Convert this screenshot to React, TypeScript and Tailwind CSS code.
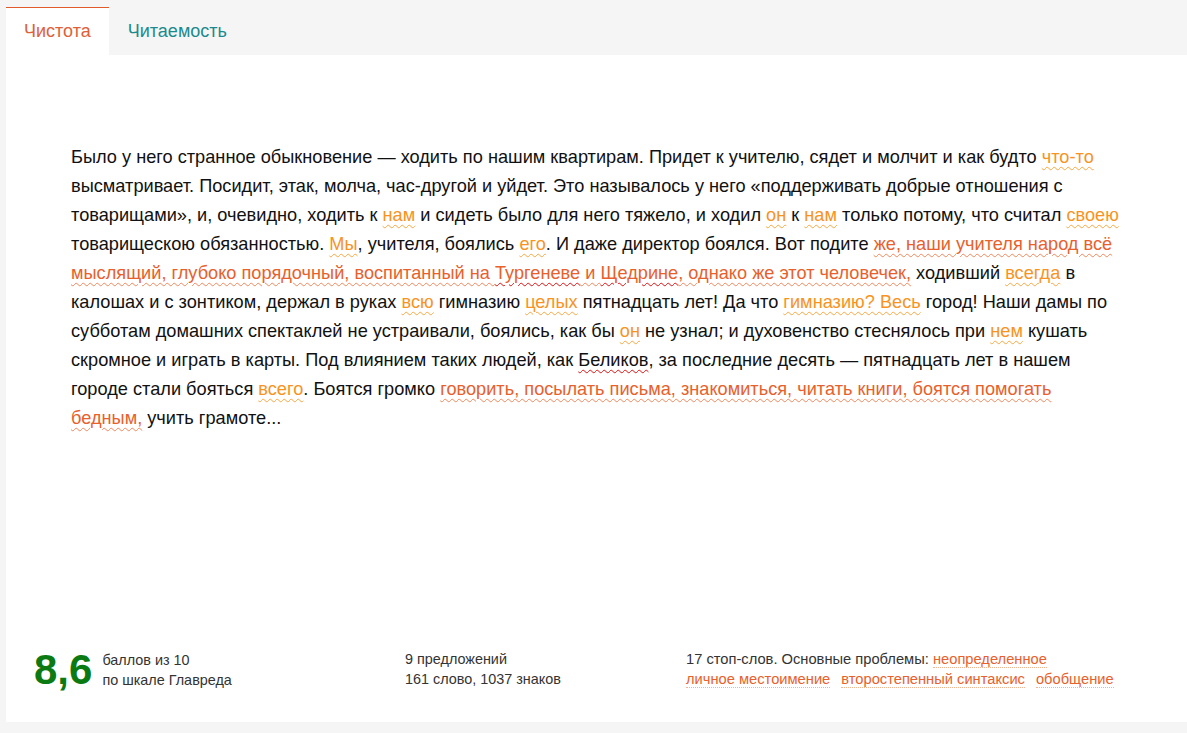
import React from "react";

const O = ({ children }: { children: React.ReactNode }) => (
  <span className="text-[#f7931e] underline decoration-wavy decoration-[#f9a640] decoration-1 underline-offset-[3px]">
    {children}
  </span>
);
const P = ({ children }: { children: React.ReactNode }) => (
  <span className="text-[#e8602c] underline decoration-wavy decoration-[#f0875a] decoration-1 underline-offset-[3px]">
    {children}
  </span>
);
const R = ({ children }: { children: React.ReactNode }) => (
  <span className="underline decoration-wavy decoration-[#e01010] decoration-1 underline-offset-[3px]">
    {children}
  </span>
);
const PR = ({ children }: { children: React.ReactNode }) => (
  <span className="text-[#e8602c] underline decoration-wavy decoration-[#e01010] decoration-1 underline-offset-[3px]">
    {children}
  </span>
);
const Tag = ({ children }: { children: React.ReactNode }) => (
  <span className="text-[#e8602c] border-b border-dotted border-[#f5b48f]">{children}</span>
);

export default function App() {
  return (
    <div
      className="min-h-[733px] w-full bg-[#f5f5f5] pl-[6px] pt-[7px]"
      style={{ fontFamily: '"Liberation Sans", Arial, sans-serif' }}
    >
      <div className="flex h-[48px]">
        <div className="flex items-center bg-white border-t border-[#e05a2b] px-[18px] text-[18px] text-[#e0603a]">
          Чистота
        </div>
        <div className="flex items-center px-[19px] text-[18px] text-[#1b8a8e]">Читаемость</div>
      </div>
      <div className="bg-white h-[667px] flex flex-col">
        <div className="pt-[88px] pl-[65px] pr-[60px] text-[18.2px] leading-[29px] text-[#111]">
          Было у него странное обыкновение — ходить по нашим квартирам. Придет к учителю, сядет и молчит и как будто{" "}
          <O>что-то</O> высматривает. Посидит, этак, молча, час-другой и уйдет. Это называлось у него «поддерживать
          добрые отношения с товарищами», и, очевидно, ходить к <O>нам</O> и сидеть было для него тяжело, и ходил{" "}
          <O>он</O> к <O>нам</O> только потому, что считал <O>своею</O> товарищескою обязанностью. <O>Мы</O>, учителя,
          боялись <O>его</O>. И даже директор боялся. Вот подите{" "}
          <P>же, наши учителя народ всё мыслящий, глубоко порядочный, воспитанный на </P>
          <PR>Тургеневе</PR>
          <P> и </P>
          <PR>Щедрине</PR>
          <P>, однако же этот человечек,</P> ходивший <O>всегда</O> в калошах и с зонтиком, держал в руках{" "}
          <O>всю</O> гимназию <O>целых</O> пятнадцать лет! Да что <O>гимназию? Весь</O> город! Наши дамы по субботам
          домашних спектаклей не устраивали, боялись, как бы <O>он</O> не узнал; и духовенство стеснялось при{" "}
          <O>нем</O> кушать скромное и играть в карты. Под влиянием таких людей, как <R>Беликов</R>, за последние
          десять — пятнадцать лет в нашем городе стали бояться <O>всего</O>. Боятся громко{" "}
          <P>говорить, посылать письма, знакомиться, читать книги, боятся помогать бедным,</P> учить грамоте...
        </div>
        <div className="mt-auto pb-[31px] pl-[28px] flex text-[14.4px] leading-[20px] text-[#333]">
          <div className="w-[371px] flex items-center gap-[10px]">
            <div className="text-[42px] font-bold leading-none text-[#0b7a12]">8,6</div>
            <div>
              <div>баллов из 10</div>
              <div>по шкале Главреда</div>
            </div>
          </div>
          <div className="w-[281px]">
            <div>9 предложений</div>
            <div>161 слово, 1037 знаков</div>
          </div>
          <div className="text-[14.7px]">
            <div>
              17 стоп-слов. Основные проблемы:{" "}
              <Tag>
                неопределенное
                <br />
                личное местоимение
              </Tag>
              <span className="ml-[11px]">
                <Tag>второстепенный синтаксис</Tag>
              </span>
              <span className="ml-[11px]">
                <Tag>обобщение</Tag>
              </span>
            </div>
          </div>
        </div>
      </div>
    </div>
  );
}
